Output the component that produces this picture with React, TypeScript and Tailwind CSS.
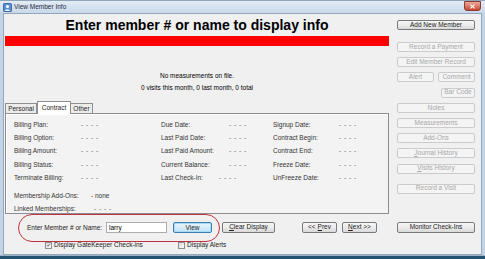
import type { ReactNode } from "react";

// ── Contract tab rows ──
const contractRows = [
  { a: "Billing Plan:", b: "Due Date:", c: "Signup Date:" },
  { a: "Billing Option:", b: "Last Paid Date:", c: "Contract Begin:" },
  { a: "Billing Amount:", b: "Last Paid Amount:", c: "Contract End:" },
  { a: "Billing Status:", b: "Current Balance:", c: "Freeze Date:" },
  { a: "Terminate Billing:", b: "Last Check-In:", c: "UnFreeze Date:", short: true },
];

const Dashes = () => <span className="text-[#6a6a6a] tracking-[0.5px]">- - - -</span>;

const Btn = ({
  children,
  disabled,
  className = "",
}: {
  children: ReactNode;
  disabled?: boolean;
  className?: string;
}) => (
  <div
    className={`flex items-center justify-center h-[10px] rounded-[2px] border leading-none whitespace-nowrap ${
      disabled
        ? "border-[#cbcbcb] bg-[#f4f4f4] text-[#a8a8a8]"
        : "border-[#7a7a7a] bg-gradient-to-b from-[#f6f6f6] via-[#ebebeb] to-[#d9d9d9] text-[#1c1c1c]"
    } ${className}`}
  >
    {children}
  </div>
);

const Check = ({ checked }: { checked?: boolean }) => (
  <div className="w-[7px] h-[7px] border border-[#8e8f8f] bg-gradient-to-br from-[#dcdcdc] to-[#fbfbfb] flex items-center justify-center">
    {checked && (
      <svg viewBox="0 0 8 8" className="w-[6px] h-[6px]">
        <path d="M1.5 4.2 L3.2 6 L6.6 1.6" fill="none" stroke="#4a5a78" strokeWidth="1.2" />
      </svg>
    )}
  </div>
);

const App = () => {
  return (
    <div
      className="w-[485px] h-[259px] flex flex-col overflow-hidden bg-[#c3d3e6] text-[6.5px] text-[#1e1e1e]"
      style={{ fontFamily: '"Liberation Sans", Arial, sans-serif' }}
    >
      {/* ── title bar ── */}
      <div className="h-[13px] flex items-center bg-gradient-to-b from-[#e3ecf6] to-[#c9d8ea] border-t border-[#8fa3bb] relative">
        <svg viewBox="0 0 10 10" className="w-[9px] h-[9px] ml-[3px]">
          <rect x="0.5" y="0.5" width="9" height="9" rx="1" fill="#5b8fd0" stroke="#2f5f9e" />
          <circle cx="5" cy="3.8" r="1.7" fill="#ffffff" />
          <path d="M1.8 9 Q5 4.8 8.2 9 Z" fill="#ffffff" />
        </svg>
        <span className="ml-[2px] text-[#1d2a3a]">View Member Info</span>
        <div className="absolute right-[4px] top-[0px] w-[17px] h-[10px] rounded-b-[3px] border border-[#8a3c32] bg-gradient-to-b from-[#e9a99b] to-[#c9462f] flex items-center justify-center">
          <svg viewBox="0 0 8 6" className="w-[7px] h-[5px]">
            <path d="M1.5 0.8 L6.5 5.2 M6.5 0.8 L1.5 5.2" stroke="#ffffff" strokeWidth="1.4" />
          </svg>
        </div>
      </div>

      {/* ── client area ── */}
      <div className="flex-1 mx-[3px] border border-[#95a7bc] bg-[#f0f0f0] relative">
        <div className="flex">
          {/* left column */}
          <div className="w-[384px] ml-[1px] flex flex-col">
            <h1 className="mt-[3px] h-[16px] leading-[16px] text-center text-[14px] font-bold text-black">
              Enter member # or name to display info
            </h1>
            <div className="mt-[3px] h-[10px] bg-[#ff0000]" />
            <div className="mt-[24px] flex flex-col items-center leading-[12px] text-black">
              <span>No measurements on file.</span>
              <span>0 visits this month, 0 last month, 0 total</span>
            </div>

            {/* tabs */}
            <div className="mt-[6px] h-[13px] flex items-end">
              <div className="h-[10px] w-[32px] border border-b-0 border-[#8c8e94] bg-[#ececec] flex items-center justify-center">
                Personal
              </div>
              <div className="h-[13px] w-[34px] border border-b-0 border-[#8c8e94] bg-white flex items-center justify-center -mb-[1px] relative z-10">
                Contract
              </div>
              <div className="h-[10px] w-[22px] border border-b-0 border-l-0 border-[#8c8e94] bg-[#ececec] flex items-center justify-center">
                Other
              </div>
            </div>
            <div className="h-[101px] border border-[#8c8e94] bg-[#f3f3f3] shadow-[inset_1px_1px_0_#ffffff] pl-[8px] pt-[4px] text-[#333333]">
              {contractRows.map((r) => (
                <div key={r.a} className="h-[13.3px] flex items-center">
                  <span className="w-[67px]">{r.a}</span>
                  <span className="w-[80px]">
                    <Dashes />
                  </span>
                  <span className={r.short ? "w-[58px]" : "w-[68px]"}>{r.b}</span>
                  <span className={r.short ? "w-[54px]" : "w-[44px]"}>
                    <Dashes />
                  </span>
                  <span className="w-[66px]">{r.c}</span>
                  <Dashes />
                </div>
              ))}
              <div className="mt-[5px] h-[13px] flex items-center">
                <span className="w-[77px]">Membership Add-Ons:</span>
                <span>- none</span>
              </div>
              <div className="h-[13px] flex items-center">
                <span className="w-[80px]">Linked Memberships:</span>
                <Dashes />
              </div>
            </div>
          </div>

          {/* right column */}
          <div className="w-[78px] ml-[8px] flex flex-col">
            <Btn className="mt-[6px]">Add New Member</Btn>
            <div className="mt-[12px] flex flex-col gap-[5.2px]">
              <Btn disabled>Record a Payment</Btn>
              <Btn disabled>Edit Member Record</Btn>
              <div className="flex gap-[4px]">
                <Btn disabled className="flex-1">
                  Alert
                </Btn>
                <Btn disabled className="flex-1">
                  Comment
                </Btn>
              </div>
              <div className="flex justify-end">
                <Btn disabled className="w-[34px]">
                  Bar Code
                </Btn>
              </div>
              <Btn disabled>Notes</Btn>
              <Btn disabled>Measurements</Btn>
              <Btn disabled>Add-Ons</Btn>
              <Btn disabled>
                <span className="underline">J</span>ournal History
              </Btn>
              <Btn disabled>
                <span className="underline">V</span>isits History
              </Btn>
            </div>
            <Btn disabled className="mt-[10px]">
              Record a Visit
            </Btn>
          </div>
        </div>

        {/* lookup row */}
        <div className="mt-[8px] h-[11px] flex items-center">
          <span className="ml-[23px] w-[79px] text-[#222222]">Enter Member # or Name:</span>
          <div className="w-[61px] h-[11px] border border-[#abadb3] bg-white flex items-center pl-[2px] text-black">
            larry
          </div>
          <div className="ml-[6px] w-[39px] h-[11px] rounded-[2px] border border-[#3c7fb1] bg-gradient-to-b from-[#eaf6fd] to-[#bfe3f8] shadow-[inset_0_0_0_1px_#a7d9f5] flex items-center justify-center">
            View
          </div>
          <Btn className="ml-[10px] w-[53px] h-[11px]">
            <span className="underline">C</span>lear Display
          </Btn>
          <Btn className="ml-[27px] w-[35px] h-[11px]">
            &lt;&lt; <span className="underline ml-[2px]">P</span>rev
          </Btn>
          <Btn className="ml-[5px] w-[35px] h-[11px]">
            <span className="underline">N</span>ext &gt;&gt;
          </Btn>
          <Btn className="ml-[20px] w-[78px] h-[11px]">Monitor Check-Ins</Btn>
        </div>

        {/* options row */}
        <div className="mt-[7px] h-[10px] flex items-center text-[#222222]">
          <div className="ml-[41px] w-[133px] flex items-center gap-[2px]">
            <Check checked />
            <span>Display GateKeeper Check-ins</span>
          </div>
          <div className="flex items-center gap-[2px]">
            <Check />
            <span>Display Alerts</span>
          </div>
        </div>

        {/* annotation ring */}
        <div className="absolute left-[14px] top-[200px] w-[202px] h-[28px] rounded-full border-[1.5px] border-[#c0323d] pointer-events-none" />
      </div>

      {/* bottom frame */}
      <div className="h-[1px] bg-[#9fb3c8]" />
      <div className="h-[3px] bg-[#23536f]" />
    </div>
  );
};

export default App;
